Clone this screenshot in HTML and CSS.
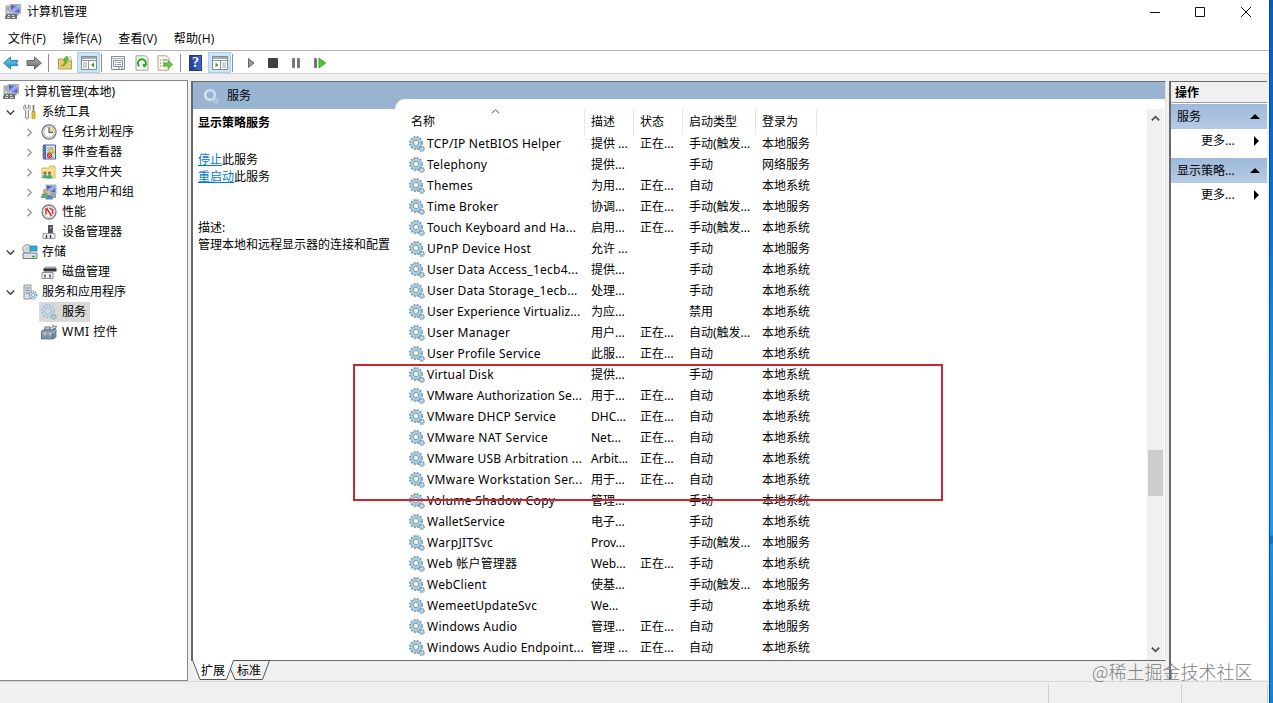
FILE: index.html
```
<!DOCTYPE html>
<html lang="zh-CN">
<head>
<meta charset="utf-8">
<title>计算机管理</title>
<link rel="stylesheet" href="styles.css">
</head>
<body>
<svg class="defs" aria-hidden="true">
  <defs>
    <linearGradient id="gb" x2="0" y2="1"><stop stop-color="#6fd0f6"/><stop offset="1" stop-color="#1c8fd0"/></linearGradient>
    <linearGradient id="gg" x2="0" y2="1"><stop stop-color="#b0b0b0"/><stop offset="1" stop-color="#6c6c6c"/></linearGradient>
    <linearGradient id="gs" x2="1" y2="1"><stop stop-color="#0e21a8"/><stop offset=".5" stop-color="#a9b8f4"/><stop offset="1" stop-color="#1730c4"/></linearGradient>
  </defs>
  <symbol id="gear" viewBox="0 0 16 16">
    <circle cx="7" cy="7" r="6" fill="none" stroke="#6e93ab" stroke-width="2" stroke-dasharray="1.7 1.45"/>
    <circle cx="7" cy="7" r="4.3" fill="#fff" stroke="#a5cee2" stroke-width="2.6"/>
    <circle cx="7" cy="7" r="5.6" fill="none" stroke="#7fa6bd" stroke-width=".6"/>
    <circle cx="7" cy="7" r="2.7" fill="#fff" stroke="#567f99" stroke-width=".8"/>
    <circle cx="12.8" cy="12.8" r="2.4" fill="#a9c9dc" stroke="#6d8da3" stroke-width="1.3" stroke-dasharray="1.1 .8"/>
    <circle cx="12.8" cy="12.8" r=".8" fill="#eef6fa"/>
  </symbol>
  <symbol id="gear-light" viewBox="0 0 16 16">
    <circle cx="7" cy="7" r="6" fill="none" stroke="#8fb2c8" stroke-width="1.6" stroke-dasharray="1.7 1.45"/>
    <circle cx="7" cy="7" r="4.5" fill="none" stroke="#bcdcec" stroke-width="2.2"/>
    <circle cx="7" cy="7" r="3.3" fill="none" stroke="#8eb0c4" stroke-width=".7"/>
    <circle cx="12.8" cy="12.8" r="2" fill="none" stroke="#78a3bd" stroke-width="1.8" stroke-dasharray="1.2 .7"/>
  </symbol>
  <symbol id="gear-band" viewBox="0 0 16 16">
    <circle cx="7" cy="7" r="4.9" fill="none" stroke="#cbe4f1" stroke-width="2.4"/>
    <circle cx="7" cy="7" r="6.2" fill="none" stroke="#a9cbe1" stroke-width="1" stroke-dasharray="1.7 1.45"/>
    <path d="M3.2 10a4.8 4.8 0 0 1 0-6" fill="none" stroke="#eef8fc"/>
    <circle cx="12.8" cy="12.8" r="2" fill="none" stroke="#c1daea" stroke-width="1.8" stroke-dasharray="1.2 .7"/>
  </symbol>
  <symbol id="pc" viewBox="0 0 16 16">
    <path d="M1 2h4v8H1z" fill="#dadada" stroke="#858585" stroke-width=".8"/><path d="M2 4h2M2 6h2" stroke="#777"/>
    <path d="M5 .5h10.500v9H5z" fill="#cfd0d4" stroke="#9b9ca3" stroke-width=".8"/><path d="M6 1.500h8.500V8.500H6z" fill="url(#gs)"/>
    <path d="M9 9.500h4l1 2H8z" fill="#a4a59e"/>
    <path d="M1 10h11v5H0v-2z" fill="#6f736d"/><path d="M3 11.500h2m2 0h2M2 13.500h3m2 0h3" stroke="#e2e2e2"/>
  </symbol>
  <symbol id="tools" viewBox="0 0 16 16">
    <path d="M3.500 .8C1.500 1.500 1 4 2 5.500l1.500 1.200V14q1.500 2 3 0V6.700L8 5.500C9 4 8.500 1.500 6.500 .8V4h-3z" fill="#e8e8e8" stroke="#858585" stroke-width=".9"/>
    <path d="M11.500 1v6" stroke="#777" stroke-width="1.6"/><path d="M10 7.500h3V14q-1.500 1.500-3 0z" fill="#f5bf28" stroke="#c08a13" stroke-width=".8"/>
  </symbol>
  <symbol id="clock" viewBox="0 0 16 16">
    <circle cx="8" cy="8" r="7.1" fill="#e6e8eb" stroke="#777b80" stroke-width="1.2"/><circle cx="8" cy="8" r="5.2" fill="#fff" stroke="#bac2cb"/>
    <path d="M8 8V3a5 5 0 0 1 5 5z" fill="#f7dc8c"/><path d="M8 3.200V8.300h4" fill="none" stroke="#5b6068" stroke-width="1.2"/>
  </symbol>
  <symbol id="event" viewBox="0 0 16 16">
    <path d="M2.500 1h12v14h-12z" fill="#d6e3f3" stroke="#3f639b"/><path d="M3 1h2v14H3z" fill="#3d6dae"/><path d="M1 3h3M1 5.500h3M1 8h3M1 10.500h3M1 13h3" stroke="#8a8f98"/>
    <path d="M6 4h6M6 6h6M6 9h7M6 13h7" stroke="#7b9cc9" stroke-width=".8"/><path d="M10.500 3l3 5.500h-6z" fill="#f7cf36" stroke="#bb9110" stroke-width=".6"/><circle cx="8.500" cy="11.500" r="2.700" fill="#d93e39"/><path d="M7.500 10.500l2 2m0-2l-2 2" stroke="#fff" stroke-width=".8"/>
  </symbol>
  <symbol id="share" viewBox="0 0 16 16">
    <path d="M1 4h7l1-2h5v12H1z" fill="#f5dc8d" stroke="#c9a94f" stroke-width=".8"/><path d="M2 6h12" stroke="#fff0b5"/>
    <circle cx="4" cy="9" r="1.500" fill="#84634a"/><circle cx="8.500" cy="9" r="1.500" fill="#84634a"/><path d="M1.500 14q0-3.500 2.500-3.500t2.500 3.500zM6 14.500q0-4 2.500-4t3 4z" fill="#3fa98c"/>
  </symbol>
  <symbol id="users" viewBox="0 0 16 16">
    <path d="M5 1h10v8.500H5z" fill="#c7cbd6" stroke="#8990a0" stroke-width=".8"/><path d="M6 2h8.200v6.300H6z" fill="url(#gs)"/><path d="M9 10h6v4H9z" fill="#9ba3ab"/>
    <circle cx="4" cy="7" r="2.300" fill="#c9ab7f"/><path d="M0 14q0-5 4-5t4 5z" fill="#6da577"/><circle cx="8" cy="9" r="2.200" fill="#d9b38b"/><path d="M4.500 15.500q0-4.500 3.500-4.500t4 4.500z" fill="#5688b3"/>
  </symbol>
  <symbol id="perf" viewBox="0 0 16 16">
    <circle cx="8" cy="8" r="7" fill="#fff" stroke="#7d7d7d" stroke-width="1.3"/><circle cx="8" cy="8" r="5.300" fill="none" stroke="#cb9a9a" stroke-width=".7"/><path d="M5 4.500v6M5.500 4l5 8M8.500 4l3 2v4" fill="none" stroke="#c82e31" stroke-width="1.5"/>
  </symbol>
  <symbol id="device" viewBox="0 0 16 16">
    <path d="M7 1h5v9H7z" fill="#555"/><path d="M9.500 3h1v1.500h-1z" fill="#fff"/><path d="M2 9.500h12v5H2z" fill="#ececec" stroke="#999"/><path d="M5.500 11v3m4-3v3" stroke="#333" stroke-width="1.3"/>
  </symbol>
  <symbol id="storage" viewBox="0 0 16 16">
    <circle cx="5" cy="5" r="4.300" fill="#d8e0dd" stroke="#8c9c97"/><circle cx="5" cy="5" r="1.200" fill="#fff" stroke="#888" stroke-width=".5"/><path d="M8 2h7v5H8z" fill="#35a8db" stroke="#19769f" stroke-width=".7"/>
    <path d="M1 9h14v5.500H1z" fill="#dde0e3" stroke="#767b80"/><path d="M10 12.500h3" stroke="#37a84a" stroke-width="1.5"/>
  </symbol>
  <symbol id="disk" viewBox="0 0 16 16">
    <path d="M4 2.500h10.500L16 5H2.500z" fill="#aaa"/><path d="M2.500 4.500H15.500v3H2.500z" fill="#333"/><path d="M1 8.500h11v6H1z" fill="#f1f1f1" stroke="#8f8f8f"/><path d="M4 10.500v3m5-3v3" stroke="#333" stroke-width="1.3"/>
  </symbol>
  <symbol id="server" viewBox="0 0 16 16">
    <path d="M2 1h7v14H2z" fill="#d9dfe3" stroke="#858e95" stroke-width=".9"/><path d="M3.500 4h4m-4 2.500h4m-4 2.500h4" stroke="#78838c"/>
    <circle cx="11" cy="11" r="3.600" fill="#d6ebf6" stroke="#6d9ab5" stroke-width="1.6" stroke-dasharray="1.4 .9"/><circle cx="11" cy="11" r="1.600" fill="#fff" stroke="#6798b5" stroke-width=".8"/>
  </symbol>
  <symbol id="wmi" viewBox="0 0 16 16">
    <path d="M.5 7L4 5h11v8l-3 2H.5z" fill="#7d95a9" stroke="#44596b" stroke-width=".7"/><path d="M1 9h11l3-3" fill="none" stroke="#b4c8d7"/><path d="M12 9v6" stroke="#44596b" stroke-width=".8"/><path d="M4 5V3h5v2" fill="none" stroke="#57636d"/><path d="M9 4.500l3-2V.8l1.500 1.700 2-.5-1 2.500h-2L11 6" fill="#ddd" stroke="#6a6a6a" stroke-width=".8"/><path d="M4 9v2.500m5-2.500v2.500" stroke="#e6eef4"/>
  </symbol>
  <symbol id="chev-r" viewBox="0 0 9 9"><path d="M2.500 .8l3.800 3.700-3.800 3.700" fill="none" stroke="#9b9b9b" stroke-width="1.4"/></symbol>
  <symbol id="chev-d" viewBox="0 0 9 9"><path d="M.8 2.500l3.700 3.700 3.700-3.700" fill="none" stroke="#424242" stroke-width="1.5"/></symbol>
  <symbol id="pane" viewBox="0 0 16 16"><path d="M.5 1.500h15v13H.5z" fill="#fff" stroke="#858b91"/><path d="M1 2h14v2H1z" fill="#a4abb2"/><path d="M1 5.500h14M7.500 6v8" stroke="#8d949b"/><path d="M2 8h4M2 10h4M2 12h4" stroke="#9ea4ab"/></symbol>
</svg>

<div class="window">
  <header class="title">
    <svg class="ico"><use href="#pc"/></svg><span>计算机管理</span>
    <svg class="controls" viewBox="0 0 102 12"><path d="M0 6.500h10M45.500 1.500h9v9h-9zM91 1l10 10M101 1L91 11" fill="none" stroke="#111"/></svg>
  </header>
  <nav class="menu"><span>文件(F)</span><span>操作(A)</span><span>查看(V)</span><span>帮助(H)</span></nav>
  <div class="toolbar">
    <svg class="tb arrow" viewBox="0 0 16 14"><path d="M.6 7L7.500 1v3.500H15l-1.500 2.500L15 9.500H7.500V13z" fill="url(#gb)" stroke="#2b7fac" stroke-width=".9"/></svg>
    <svg class="tb arrow" viewBox="0 0 16 14"><path d="M15.400 7L8.500 1v3.500H1v5h7.500V13z" fill="url(#gg)" stroke="#5e5e5e" stroke-width=".9"/></svg>
    <i class="sep s1"></i>
    <svg class="tb" viewBox="0 0 16 16"><path d="M1.500 4h4l1 1.500h8V14h-13z" fill="#edcb6d" stroke="#b79241" stroke-width=".9"/><path d="M9 2h5v4H9z" fill="#fff" stroke="#b79241" stroke-width=".7"/><path d="M4 11q4-1 4-6H6l3.500-4L12 5h-2q0 6-6 6" fill="#59c739" stroke="#3c9a26" stroke-width=".6"/></svg>
    <span class="on"><svg class="tb" viewBox="0 0 16 16"><use href="#pane"/><path d="M13 7.500v5L10 10z" fill="#37ad22"/></svg></span>
    <i class="sep s2"></i>
    <svg class="tb" viewBox="0 0 16 16"><path d="M1.500 1.500h13v13h-13z" fill="#f5f5f5" stroke="#858b91"/><path d="M2 3.500h12" stroke="#a9b1b9"/><path d="M3.500 5.500h9v6h-9z" fill="#fff" stroke="#87919c"/><path d="M5 7.500h1.500m1 0H11M5 9.500h1.500m1 0H11M8 13h2m1 0h2" stroke="#60799a" stroke-width=".8"/></svg>
    <svg class="tb g1" viewBox="0 0 16 16"><path d="M2 .8h9.500L14 3.500v11.700H2z" fill="#f8f8f5" stroke="#a0a09a"/><path d="M5.300 11.200a4 4 0 1 1 5.600-.4" fill="none" stroke="#35a52a" stroke-width="2"/><path d="M8.300 8.800l5 .6-3.300 3.600z" fill="#35a52a"/></svg>
    <svg class="tb g2" viewBox="0 0 16 16"><path d="M1 .8h8.500L12 3.500v11.700H1z" fill="#fbf9e9" stroke="#aaa388"/><path d="M3 5h1m1.500 0h5M3 8h1m1.500 0h3M3 11h1m1.500 0h3" stroke="#77776e"/><path d="M7 8h4V5.500l4.700 4-4.700 4V11H7z" fill="#5fcb3b" stroke="#3b9c27" stroke-width=".6"/></svg>
    <i class="sep s3"></i>
    <span class="help">?</span>
    <span class="on"><svg class="tb" viewBox="0 0 16 16"><path d="M.5 1.500h15v13H.5z" fill="#fff" stroke="#858b91"/><path d="M1 2h14v2H1z" fill="#a4abb2"/><path d="M1 5.500h14M8.500 6v8" stroke="#8d949b"/><path d="M10 8h4m-4 2h4m-4 2h4" stroke="#9ea4ab"/><path d="M3.500 7.500v5l3-2.500z" fill="#37ad22"/></svg></span>
    <i class="sep s4"></i>
    <svg class="play" viewBox="0 0 80 12"><path d="M1.500 1.500v9L7 6z" fill="#999" stroke="#666"/><rect x="21" y="1" width="10" height="10" rx="1" fill="#3e3e3e"/><path d="M45.500 1.500h2v9h-2zM50.500 1.500h2v9h-2z" fill="#777" stroke="#666" stroke-width=".8"/><path d="M67.500 1.500h2v9h-2z" fill="#666" stroke="#555" stroke-width=".6"/><path d="M72 1.200v9.600L78.500 6z" fill="#48ca2d" stroke="#35a522"/></svg>
  </div>

  <main class="body">
    <aside class="tree">
      <div class="n root"><svg class="ico"><use href="#pc"/></svg><span>计算机管理(本地)</span></div>
      <div class="n l1"><svg class="chev"><use href="#chev-d"/></svg><svg class="ico"><use href="#tools"/></svg><span>系统工具</span></div>
      <div class="n l2"><svg class="chev"><use href="#chev-r"/></svg><svg class="ico"><use href="#clock"/></svg><span>任务计划程序</span></div>
      <div class="n l2"><svg class="chev"><use href="#chev-r"/></svg><svg class="ico"><use href="#event"/></svg><span>事件查看器</span></div>
      <div class="n l2"><svg class="chev"><use href="#chev-r"/></svg><svg class="ico"><use href="#share"/></svg><span>共享文件夹</span></div>
      <div class="n l2"><svg class="chev"><use href="#chev-r"/></svg><svg class="ico"><use href="#users"/></svg><span>本地用户和组</span></div>
      <div class="n l2"><svg class="chev"><use href="#chev-r"/></svg><svg class="ico"><use href="#perf"/></svg><span>性能</span></div>
      <div class="n l2"><svg class="chev"></svg><svg class="ico"><use href="#device"/></svg><span>设备管理器</span></div>
      <div class="n l1"><svg class="chev"><use href="#chev-d"/></svg><svg class="ico"><use href="#storage"/></svg><span>存储</span></div>
      <div class="n l2"><svg class="chev"></svg><svg class="ico"><use href="#disk"/></svg><span>磁盘管理</span></div>
      <div class="n l1"><svg class="chev"><use href="#chev-d"/></svg><svg class="ico"><use href="#server"/></svg><span>服务和应用程序</span></div>
      <div class="n l2"><svg class="chev"></svg><div class="sel"><svg class="ico"><use href="#gear-light"/></svg><span>服务</span></div></div>
      <div class="n l2"><svg class="chev"></svg><svg class="ico"><use href="#wmi"/></svg><span class="wmi">WMI 控件</span></div>
    </aside>

    <section class="center">
      <div class="view">
        <div class="info">
          <div class="band"><svg class="ico"><use href="#gear-band"/></svg><span>服务</span></div>
          <div class="text">
            <b>显示策略服务</b>
            <p class="links"><a>停止</a>此服务<br><a>重启动</a>此服务</p>
            <p class="desc">描述:<br>管理本地和远程显示器的连接和配置</p>
          </div>
        </div>
        <div class="list">
          <div class="table">
            <div class="row head"><span class="c0">名称</span><span>描述</span><span>状态</span><span>启动类型</span><span>登录为</span><svg class="sort" viewBox="0 0 9 5"><path d="M.8 4.300L4.500 .8l3.700 3.500" fill="none" stroke="#555"/></svg></div>
            <div class="row"><svg class="ico"><use href="#gear"/></svg><span>TCP/IP NetBIOS Helper</span><span>提供 ...</span><span>正在...</span><span>手动(触发...</span><span>本地服务</span></div>
            <div class="row"><svg class="ico"><use href="#gear"/></svg><span>Telephony</span><span>提供...</span><span></span><span>手动</span><span>网络服务</span></div>
            <div class="row"><svg class="ico"><use href="#gear"/></svg><span>Themes</span><span>为用...</span><span>正在...</span><span>自动</span><span>本地系统</span></div>
            <div class="row"><svg class="ico"><use href="#gear"/></svg><span>Time Broker</span><span>协调...</span><span>正在...</span><span>手动(触发...</span><span>本地服务</span></div>
            <div class="row"><svg class="ico"><use href="#gear"/></svg><span>Touch Keyboard and Ha...</span><span>启用...</span><span>正在...</span><span>手动(触发...</span><span>本地系统</span></div>
            <div class="row"><svg class="ico"><use href="#gear"/></svg><span>UPnP Device Host</span><span>允许 ...</span><span></span><span>手动</span><span>本地服务</span></div>
            <div class="row"><svg class="ico"><use href="#gear"/></svg><span>User Data Access_1ecb4...</span><span>提供...</span><span></span><span>手动</span><span>本地系统</span></div>
            <div class="row"><svg class="ico"><use href="#gear"/></svg><span>User Data Storage_1ecb...</span><span>处理...</span><span></span><span>手动</span><span>本地系统</span></div>
            <div class="row"><svg class="ico"><use href="#gear"/></svg><span class="tight">User Experience Virtualiz...</span><span>为应...</span><span></span><span>禁用</span><span>本地系统</span></div>
            <div class="row"><svg class="ico"><use href="#gear"/></svg><span>User Manager</span><span>用户...</span><span>正在...</span><span>自动(触发...</span><span>本地系统</span></div>
            <div class="row"><svg class="ico"><use href="#gear"/></svg><span>User Profile Service</span><span>此服...</span><span>正在...</span><span>自动</span><span>本地系统</span></div>
            <div class="row"><svg class="ico"><use href="#gear"/></svg><span>Virtual Disk</span><span>提供...</span><span></span><span>手动</span><span>本地系统</span></div>
            <div class="row"><svg class="ico"><use href="#gear"/></svg><span class="tight">VMware Authorization Se...</span><span>用于...</span><span>正在...</span><span>自动</span><span>本地系统</span></div>
            <div class="row"><svg class="ico"><use href="#gear"/></svg><span>VMware DHCP Service</span><span>DHC...</span><span>正在...</span><span>自动</span><span>本地系统</span></div>
            <div class="row"><svg class="ico"><use href="#gear"/></svg><span class="wide">VMware NAT Service</span><span>Net...</span><span>正在...</span><span>自动</span><span>本地系统</span></div>
            <div class="row"><svg class="ico"><use href="#gear"/></svg><span>VMware USB Arbitration ...</span><span>Arbit...</span><span>正在...</span><span>自动</span><span>本地系统</span></div>
            <div class="row"><svg class="ico"><use href="#gear"/></svg><span class="wide">VMware Workstation Ser...</span><span>用于...</span><span>正在...</span><span>自动</span><span>本地系统</span></div>
            <div class="row"><svg class="ico"><use href="#gear"/></svg><span class="wide">Volume Shadow Copy</span><span>管理...</span><span></span><span>手动</span><span>本地系统</span></div>
            <div class="row"><svg class="ico"><use href="#gear"/></svg><span>WalletService</span><span>电子...</span><span></span><span>手动</span><span>本地系统</span></div>
            <div class="row"><svg class="ico"><use href="#gear"/></svg><span class="wide">WarpJITSvc</span><span>Prov...</span><span></span><span>手动(触发...</span><span>本地服务</span></div>
            <div class="row"><svg class="ico"><use href="#gear"/></svg><span>Web 帐户管理器</span><span>Web...</span><span>正在...</span><span>手动</span><span>本地系统</span></div>
            <div class="row"><svg class="ico"><use href="#gear"/></svg><span>WebClient</span><span>使基...</span><span></span><span>手动(触发...</span><span>本地服务</span></div>
            <div class="row"><svg class="ico"><use href="#gear"/></svg><span>WemeetUpdateSvc</span><span>We...</span><span></span><span>手动</span><span>本地系统</span></div>
            <div class="row"><svg class="ico"><use href="#gear"/></svg><span>Windows Audio</span><span>管理...</span><span>正在...</span><span>自动</span><span>本地服务</span></div>
            <div class="row"><svg class="ico"><use href="#gear"/></svg><span>Windows Audio Endpoint...</span><span>管理 ...</span><span>正在...</span><span>自动</span><span>本地系统</span></div>
          </div>
          <div class="scroll">
            <svg viewBox="0 0 9 9"><path d="M.8 6.300l3.700-3.600 3.700 3.600" fill="none" stroke="#505050" stroke-width="1.800"/></svg>
            <div class="thumb"></div>
            <svg viewBox="0 0 9 9"><path d="M.8 2.700l3.700 3.600 3.700-3.600" fill="none" stroke="#505050" stroke-width="1.800"/></svg>
          </div>
        </div>
      </div>
      <div class="tabs">
        <svg class="tabline" viewBox="0 0 90 22"><path d="M0 0l7.500 19.500h28L42.500 0z" fill="#fff"/><path d="M.5 0L8 19.500h26.500L41.500 .5h36L70.500 19.500H43L38.500 9" fill="none" stroke="#555"/></svg>
        <span>扩展</span><span>标准</span>
      </div>
    </section>

    <aside class="actions">
      <div class="ahead">操作</div>
      <div class="abar"><span>服务</span><svg viewBox="0 0 10 5"><path d="M0 5L5 0l5 5z"/></svg></div>
      <div class="more"><span>更多...</span><svg viewBox="0 0 5 10"><path d="M0 0l5 5-5 5z"/></svg></div>
      <div class="abar"><span>显示策略...</span><svg viewBox="0 0 10 5"><path d="M0 5L5 0l5 5z"/></svg></div>
      <div class="more"><span>更多...</span><svg viewBox="0 0 5 10"><path d="M0 0l5 5-5 5z"/></svg></div>
    </aside>
  </main>
  <footer class="status"><i></i><i></i><i></i></footer>
</div>
<div class="edge"></div>
<div class="marker"></div>
<div class="watermark">@稀土掘金技术社区</div>
</body>
</html>
```

FILE: styles.css
```
* { box-sizing: border-box; }
body {
  margin: 0;
  width: 1273px;
  height: 703px;
  overflow: hidden;
  display: flex;
  background: #f0f0f0;
  color: #000;
  font: 12px/16px "Noto Sans", "Noto Sans CJK SC", sans-serif;
  white-space: nowrap;
}
.defs { position: absolute; width: 0; height: 0; }
svg { display: block; flex: none; }
.ico { width: 16px; height: 16px; }
.window { width: 1269px; height: 703px; display: flex; flex-direction: column; }
.edge {
  width: 4px;
  height: 703px;
  border-left: 1px solid #064f91;
  background: linear-gradient(#0759c8 0, #0870df 220px, #159bf2 440px, #159bf2 535px, #0776cf 536px, #0776cf 543px, #0d91f3 544px, #0b83e5 703px);
}

.title { height: 27px; background: #fff; display: flex; align-items: center; padding: 0 17px 4px 5px; gap: 6px; }
.controls { width: 102px; height: 12px; margin-left: auto; }
.menu { height: 24px; padding: 4px 8px 0; display: flex; gap: 16.6px; background: #fff; border-bottom: 1px solid #b4b4b4; font-family: "Open Sans", "Noto Sans CJK SC", sans-serif; letter-spacing: .12px; }
.toolbar { height: 23px; background: #fff; border-bottom: 1px solid #d4d4d4; display: flex; align-items: center; padding: 1px 0 0 3px; }
.tb { width: 16px; height: 16px; }
.arrow { height: 14px; margin-right: 7px; }
.sep { width: 1px; height: 18px; background: #8b8b8b; }
.s1 { margin: 0 8px 0 -1px; }
.s2 { margin: 0 8px 0 1px; }
.s3 { margin: 0 8px 0 7px; }
.s4 { margin: 0 14px 0 1px; }
.on { width: 23px; height: 21px; background: #cce4f8; border: 1px solid #a8d1f3; display: flex; align-items: center; justify-content: center; }
.tb + .on { margin-left: 4px; }
.g1 { margin-left: 8px; }
.g2 { margin-left: 7px; }
.help { width: 13px; height: 16px; margin-right: 6px; background: linear-gradient(90deg, #1e3d91, #4167c8); border: 1px solid #223f86; color: #fff; font: bold 14px/14px "Liberation Serif", serif; text-align: center; }
.play { width: 80px; height: 12px; }

.body { height: 607px; display: flex; padding-top: 7px; }
.tree { width: 188px; height: 601px; margin-top: -1px; background: #fff; border: 1px solid #828790; border-left: 0; padding-top: 1px; display: flex; flex-direction: column; }
.n { height: 20px; display: flex; align-items: center; }
.n .ico { margin-right: 5px; }
.n > span, .sel > span { margin-top: -1px; }
.n > .wmi { letter-spacing: .5px; }
.root { padding-left: 3px; }
.chev { width: 9px; height: 9px; margin-right: 7px; }
.l1 { padding-left: 6px; }
.l1 .ico { margin-right: 4px; }
.l2 { padding-left: 25px; }
.sel { height: 20px; display: flex; align-items: center; background: #d9d9d9; margin-left: -2px; padding: 0 4px 0 2px; }

.center { width: 975px; margin-left: 3px; display: flex; flex-direction: column; }
.view { height: 580px; border: 2px solid #696969; border-width: 1px 1px 1px 2px; border-right-color: #e3e3e3; background: #99b4d1; display: flex; }
.info { width: 202px; display: flex; flex-direction: column; }
.band { height: 27px; display: flex; align-items: center; padding-left: 10px; gap: 8px; }
.text { flex: 1; background: #fff; padding: 6px 0 0 5px; }
.text b { display: block; }
.text p { margin: 0; line-height: 17px; }
.text .links { margin-top: 20px; }
.text .desc { margin-top: 34px; }
.text a { color: #0078d7; text-decoration: underline; }
.list { flex: 1; margin-top: 17px; background: #fff; border-top-left-radius: 10px; display: flex; justify-content: space-between; padding-right: 1px; }
.table { padding: 10px 0 0 14px; letter-spacing: .24px; }
.row { height: 21px; display: grid; grid-template-columns: 18px 164px 49px 49px 73px 60px; align-items: center; }
.row > span:nth-of-type(n+2) { letter-spacing: 0; }
.tight { letter-spacing: .13px; }
.wide { letter-spacing: .36px; }
.head { height: 24px; position: relative; grid-template-columns: 182px 49px 49px 73px 60px; padding-bottom: 3px; }
.head span:first-child { padding-left: 2px; letter-spacing: 0; }
.head span:nth-of-type(n+2) { height: 26px; line-height: 26px; border-left: 1px solid #e5e5e5; margin-left: -7px; padding-left: 6px; }
.head span:nth-of-type(5) { border-right: 1px solid #e5e5e5; margin-right: 5px; }
.sort { position: absolute; left: 82px; top: 0; width: 9px; height: 5px; }
.scroll { width: 17px; margin-top: 10px; background: #f0f0f0; display: flex; flex-direction: column; align-items: flex-start; padding: 5px 0 4px; }
.scroll svg { width: 9px; height: 9px; margin-left: 4px; }
.thumb { width: 15px; height: 46px; background: #cdcdcd; margin: 327px 0 149px 1px; }
.tabs { height: 20px; position: relative; display: flex; padding: 1px 0 0 10px; gap: 12px; line-height: 18px; }
.tabs span { position: relative; }
.tabline { position: absolute; left: 1px; top: -1px; width: 90px; height: 22px; }

.actions { width: 98px; height: 599px; margin-left: 3px; background: #fff; border: 2px solid #696969; border-width: 1px 0 0 2px; display: flex; flex-direction: column; }
.ahead { height: 21px; background: #f0f0f0; border-bottom: 1px solid #a0a0a0; padding-left: 4px; font-weight: bold; line-height: 21px; margin-bottom: 1px; }
.abar { height: 25px; display: flex; align-items: center; justify-content: space-between; padding: 0 7px 0 6px; background: linear-gradient(#9eb9da, #b6cbe5); }
.abar svg { width: 10px; height: 5px; }
.more { height: 24px; display: flex; align-items: center; justify-content: space-between; padding: 0 8px 0 30px; margin-bottom: 5px; }
.more svg { width: 5px; height: 10px; }
.status { height: 22px; border-top: 1px solid #d7d7d7; display: flex; padding-top: 2px; }
.status i { border-right: 1px solid #d0d0d0; width: 1049px; }
.status i + i { width: 133px; }
.status i + i + i { width: 86px; }

.marker { position: absolute; left: 353px; top: 364px; width: 590px; height: 137px; border: 2px solid #c9262f; }
.watermark { position: absolute; left: 1092px; top: 660px; font: 18px/22px "Noto Sans CJK SC", sans-serif; color: #808080; font-weight: 300; }
```
